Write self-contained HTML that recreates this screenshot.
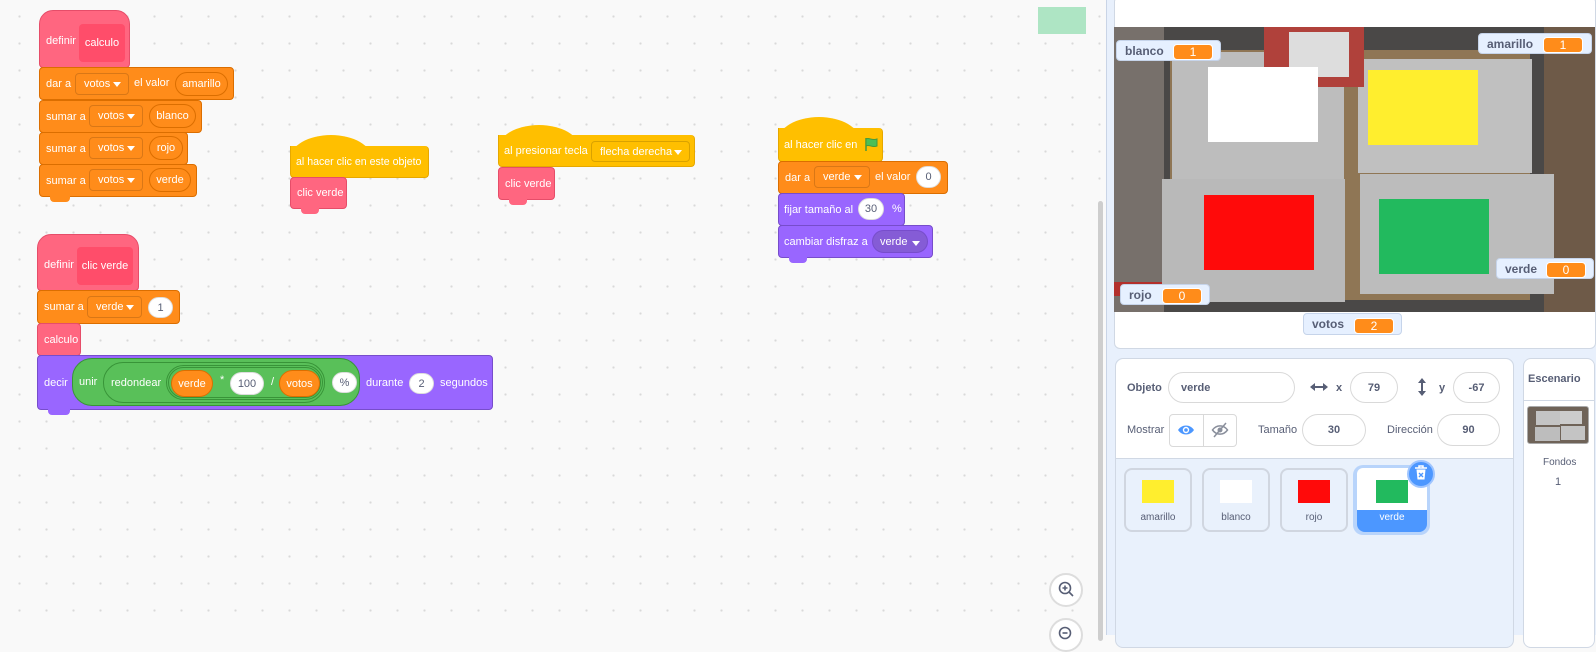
<!DOCTYPE html>
<html><head><meta charset="utf-8"><style>
*{box-sizing:border-box;margin:0;padding:0}
body{width:1596px;height:635px;overflow:hidden;position:relative;font-family:"Liberation Sans",sans-serif;background:#f9f9f9}
.ws{position:absolute;left:0;top:0;width:1106px;height:635px;background-color:#f9f9f9;background-image:radial-gradient(circle,#d9d9d9 1px,transparent 1.3px);background-size:27px 27px;background-position:6px 3px}
.a{position:absolute}
.b{position:absolute;border-radius:4px;border:1px solid;color:#fff;font-size:11px;display:flex;align-items:center;padding-left:6px;white-space:nowrap}
.ev{background:#ffbf00;border-color:#e6a800}
.ctl{background:#ff8c1a;border-color:#db6e00}
.my{background:#ff6680;border-color:#e64d69}
.lk{background:#9966ff;border-color:#774dcb}
.dd{position:absolute;border:1px solid rgba(0,0,0,.15);border-radius:4px;display:flex;align-items:center;padding-left:8px;color:#fff;font-size:11px}
.dd i{position:absolute;right:7px;top:50%;margin-top:-2px;width:0;height:0;border-left:4px solid transparent;border-right:4px solid transparent;border-top:5px solid #fff}
.ov{position:absolute;border-radius:20px;display:flex;align-items:center;justify-content:center;font-size:11px;color:#fff}
.wov{background:#fff;color:#575e75;border:1px solid #ddd}
.t{position:absolute;color:#fff;font-size:11px;white-space:nowrap}
.hat{position:absolute;border-radius:50% 50% 0 0/100% 100% 0 0}
.mon{position:absolute;background:#e6f0ff;border:1px solid #c6d4ea;border-radius:4px;font-size:12px;font-weight:bold;color:#575e75}
.mon span{position:absolute;top:3px}
.mon b{position:absolute;background:#ff8c1a;color:#fff;border-radius:4px;font-weight:normal;font-size:12px;text-align:center;line-height:14px;border:1px solid #fff}
.inp{position:absolute;border:1px solid #d9d9d9;border-radius:20px;background:#fff;font-size:11px;font-weight:bold;color:#575e75;display:flex;align-items:center;justify-content:center}
.lbl{position:absolute;font-size:11px;color:#575e75}
.tile{position:absolute;width:68px;height:64px;border:2px solid #d0d6e0;border-radius:8px;background:#e9f1fc;font-size:10px;color:#575e75;text-align:center}
.tile div{position:absolute;left:16px;top:10px;width:32px;height:23px}
.tile p{position:absolute;left:0;right:0;top:42px}
</style></head><body>
<div class="ws"></div>
<div class="a" style="left:1038px;top:7px;width:48px;height:27px;background:#aee5c4"></div>

<!-- definir calculo -->
<div class="b my" style="left:39px;top:10px;width:91px;height:58px;border-radius:14px 14px 4px 4px;padding-top:4px">definir</div>
<div class="a" style="left:79px;top:24px;width:46px;height:38px;background:#ff4d6a;border-radius:4px;color:#fff;font-size:11px;display:flex;align-items:center;justify-content:center">calculo</div>
<div class="b ctl" style="left:39px;top:67px;width:195px;height:33px">dar a</div>
<div class="dd" style="left:75px;top:73px;width:54px;height:22px">votos<i></i></div>
<div class="t" style="left:134px;top:77px">el valor</div>
<div class="ov" style="left:175px;top:72px;width:53px;height:24px;border:1px solid #db6e00">amarillo</div>
<div class="b ctl" style="left:39px;top:100px;width:163px;height:33px">sumar a</div>
<div class="dd" style="left:89px;top:105px;width:54px;height:22px">votos<i></i></div>
<div class="ov" style="left:149px;top:104px;width:47px;height:24px;border:1px solid #db6e00">blanco</div>
<div class="b ctl" style="left:39px;top:132px;width:149px;height:33px">sumar a</div>
<div class="dd" style="left:89px;top:137px;width:54px;height:22px">votos<i></i></div>
<div class="ov" style="left:149px;top:136px;width:34px;height:24px;border:1px solid #db6e00">rojo</div>
<div class="b ctl" style="left:39px;top:164px;width:158px;height:33px">sumar a</div>
<div class="dd" style="left:89px;top:169px;width:54px;height:22px">votos<i></i></div>
<div class="ov" style="left:149px;top:168px;width:42px;height:24px;border:1px solid #db6e00">verde</div>
<div class="a" style="left:50px;top:196px;width:20px;height:6px;background:#ff8c1a;border-radius:0 0 4px 4px"></div>

<!-- al hacer clic en este objeto -->
<div class="hat ev" style="left:290px;top:135px;width:82px;height:24px"></div>
<div class="b ev" style="left:290px;top:146px;width:139px;height:32px;border-top:none;border-radius:0 4px 4px 4px;padding-left:5px;font-size:10.6px">al hacer clic en este objeto</div>
<div class="b my" style="left:290px;top:177px;width:57px;height:32px">clic verde</div>
<div class="a" style="left:301px;top:208px;width:18px;height:6px;background:#ff6680;border-radius:0 0 4px 4px"></div>

<!-- al presionar tecla -->
<div class="hat ev" style="left:498px;top:125px;width:82px;height:24px"></div>
<div class="b ev" style="left:498px;top:135px;width:197px;height:32px;border-top:none;border-radius:0 4px 4px 4px;padding-left:5px">al presionar tecla</div>
<div class="dd" style="left:591px;top:141px;width:99px;height:21px">flecha derecha<i></i></div>
<div class="b my" style="left:498px;top:167px;width:57px;height:33px">clic verde</div>
<div class="a" style="left:509px;top:199px;width:18px;height:6px;background:#ff6680;border-radius:0 0 4px 4px"></div>

<!-- flag script -->
<div class="hat ev" style="left:778px;top:117px;width:82px;height:24px"></div>
<div class="b ev" style="left:778px;top:128px;width:105px;height:34px;border-top:none;border-radius:0 4px 4px 4px;padding-left:5px">al hacer clic en</div>
<svg class="a" style="left:864px;top:137px" width="14" height="14" viewBox="0 0 14 14"><path d="M2 1v13" stroke="#45993d" stroke-width="1.5"/><path d="M2 2c3-2 6 2 11 0v7c-5 2-8-2-11 0z" fill="#4cbf56" stroke="#45993d"/></svg>
<div class="b ctl" style="left:778px;top:161px;width:170px;height:33px">dar a</div>
<div class="dd" style="left:814px;top:166px;width:56px;height:22px">verde<i></i></div>
<div class="t" style="left:875px;top:171px">el valor</div>
<div class="ov wov" style="left:916px;top:166px;width:25px;height:22px">0</div>
<div class="b lk" style="left:778px;top:193px;width:127px;height:33px;padding-left:5px">fijar tamaño al</div>
<div class="ov wov" style="left:858px;top:198px;width:26px;height:22px">30</div>
<div class="t" style="left:892px;top:203px">%</div>
<div class="b lk" style="left:778px;top:225px;width:155px;height:33px;padding-left:5px">cambiar disfraz a</div>
<div class="ov" style="left:872px;top:230px;width:56px;height:23px;background:#855cd6;border:1px solid #774dcb;justify-content:flex-start;padding-left:7px">verde<i style="position:absolute;right:7px;top:10px;border-left:4px solid transparent;border-right:4px solid transparent;border-top:5px solid #fff"></i></div>
<div class="a" style="left:789px;top:257px;width:18px;height:6px;background:#9966ff;border-radius:0 0 4px 4px"></div>

<!-- definir clic verde -->
<div class="b my" style="left:37px;top:234px;width:102px;height:57px;border-radius:14px 14px 4px 4px;padding-top:4px">definir</div>
<div class="a" style="left:77px;top:247px;width:56px;height:38px;background:#ff4d6a;border-radius:4px;color:#fff;font-size:11px;display:flex;align-items:center;justify-content:center">clic verde</div>
<div class="b ctl" style="left:37px;top:290px;width:143px;height:34px">sumar a</div>
<div class="dd" style="left:87px;top:296px;width:55px;height:22px">verde<i></i></div>
<div class="ov wov" style="left:148px;top:297px;width:25px;height:21px">1</div>
<div class="b my" style="left:37px;top:323px;width:44px;height:33px">calculo</div>
<div class="b lk" style="left:37px;top:355px;width:456px;height:55px">decir</div>
<div class="a" style="left:48px;top:409px;width:22px;height:6px;background:#9966ff;border-radius:0 0 4px 4px"></div>
<div class="ov" style="left:72px;top:358px;width:288px;height:48px;background:#59c059;border:1px solid #389438;justify-content:flex-start;padding-left:6px">unir</div>
<div class="ov" style="left:103px;top:362px;width:222px;height:41px;background:#59c059;border:1px solid #389438;justify-content:flex-start;padding-left:7px">redondear</div>
<div class="ov" style="left:166px;top:365px;width:157px;height:35px;background:#59c059;border:3px double #389438"></div>
<div class="ov" style="left:171px;top:370px;width:42px;height:27px;background:#ff8c1a;border:1px solid #db6e00">verde</div>
<div class="t" style="left:220px;top:374px">*</div>
<div class="ov wov" style="left:230px;top:372px;width:34px;height:23px">100</div>
<div class="t" style="left:271px;top:376px">/</div>
<div class="ov" style="left:279px;top:370px;width:41px;height:27px;background:#ff8c1a;border:1px solid #db6e00">votos</div>
<div class="ov wov" style="left:332px;top:372px;width:25px;height:21px">%</div>
<div class="t" style="left:366px;top:377px">durante</div>
<div class="ov wov" style="left:409px;top:373px;width:25px;height:21px">2</div>
<div class="t" style="left:440px;top:377px">segundos</div>

<!-- scrollbar & zoom -->
<div class="a" style="left:1098px;top:201px;width:5px;height:440px;background:#cecece;border-radius:3px"></div>
<div class="a" style="left:1049px;top:573px;width:34px;height:34px;border-radius:50%;background:#fff;border:2px solid #ddd"></div>
<svg class="a" style="left:1057px;top:580px" width="20" height="20" viewBox="0 0 20 20"><circle cx="8" cy="8" r="5.5" fill="none" stroke="#575e75" stroke-width="1.6"/><path d="M8 5.5v5M5.5 8h5M12 12l4 4" stroke="#575e75" stroke-width="1.6"/></svg>
<div class="a" style="left:1049px;top:618px;width:34px;height:34px;border-radius:50%;background:#fff;border:2px solid #ddd"></div>
<svg class="a" style="left:1057px;top:625px" width="20" height="20" viewBox="0 0 20 20"><circle cx="8" cy="8" r="5.5" fill="none" stroke="#575e75" stroke-width="1.6"/><path d="M5.5 8h5" stroke="#575e75" stroke-width="1.6"/></svg>

<!-- right side -->
<div class="a" style="left:1106px;top:0;width:490px;height:635px;background:#e8f0fc;border-left:1px solid #c9d4e6"></div>
<div class="a" style="left:1114px;top:-4px;width:482px;height:353px;background:#fff;border:1px solid #d0d8e4;border-radius:6px"></div>
<!-- stage photo -->
<div class="a" style="left:1114px;top:27px;width:481px;height:285px;background:#4a4847;overflow:hidden">
 <div class="a" style="left:0;top:0;width:50px;height:285px;background:#77706b"></div>
 <div class="a" style="left:430px;top:0;width:51px;height:285px;background:#6e5a48"></div>
 <div class="a" style="left:0;top:255px;width:50px;height:14px;background:#b3302c"></div>
 <div class="a" style="left:56px;top:23px;width:360px;height:250px;background:#8f7655"></div>
 <div class="a" style="left:58px;top:25px;width:172px;height:142px;background:#bdbdbd"></div>
 <div class="a" style="left:244px;top:32px;width:174px;height:114px;background:#c0c0c0"></div>
 <div class="a" style="left:48px;top:152px;width:183px;height:123px;background:#b9b9b9"></div>
 <div class="a" style="left:246px;top:147px;width:194px;height:120px;background:#bcbcbc"></div>
 <div class="a" style="left:150px;top:0;width:100px;height:60px;background:#b0413b"></div>
 <div class="a" style="left:175px;top:5px;width:60px;height:45px;background:#ddd"></div>
</div>
<div class="a" style="left:1208px;top:67px;width:110px;height:75px;background:#fff"></div>
<div class="a" style="left:1368px;top:70px;width:110px;height:75px;background:#ffee2e"></div>
<div class="a" style="left:1204px;top:195px;width:110px;height:75px;background:#ff0a0a"></div>
<div class="a" style="left:1379px;top:199px;width:110px;height:75px;background:#22ba5e"></div>
<div class="mon" style="left:1116px;top:40px;width:105px;height:21px"><span style="left:8px">blanco</span><b style="left:56px;top:3px;width:40px">1</b></div>
<div class="mon" style="left:1478px;top:33px;width:114px;height:21px"><span style="left:8px">amarillo</span><b style="left:64px;top:3px;width:40px">1</b></div>
<div class="mon" style="left:1496px;top:258px;width:98px;height:21px"><span style="left:8px">verde</span><b style="left:49px;top:3px;width:40px">0</b></div>
<div class="mon" style="left:1120px;top:284px;width:90px;height:21px"><span style="left:8px">rojo</span><b style="left:41px;top:3px;width:40px">0</b></div>
<div class="mon" style="left:1303px;top:313px;width:99px;height:22px"><span style="left:8px">votos</span><b style="left:50px;top:4px;width:40px">2</b></div>

<!-- sprite info -->
<div class="a" style="left:1115px;top:358px;width:399px;height:290px;background:#e9f1fc;border:1px solid #d0d8e4;border-radius:8px"></div>
<div class="a" style="left:1116px;top:359px;width:397px;height:100px;background:#fff;border-bottom:1px solid #d0d8e4;border-radius:8px 8px 0 0"></div>
<div class="lbl" style="left:1127px;top:382px;font-weight:bold">Objeto</div>
<div class="inp" style="left:1168px;top:372px;width:127px;height:31px;justify-content:flex-start;padding-left:12px">verde</div>
<svg class="a" style="left:1310px;top:382px" width="18" height="10" viewBox="0 0 18 10"><path d="M3 5h12" stroke="#575e75" stroke-width="2"/><path d="M0 5l5-4v8zM18 5l-5-4v8z" fill="#575e75"/></svg>
<div class="lbl" style="left:1336px;top:382px;font-weight:bold">x</div>
<div class="inp" style="left:1350px;top:372px;width:48px;height:31px">79</div>
<svg class="a" style="left:1417px;top:378px" width="10" height="18" viewBox="0 0 10 18"><path d="M5 3v12" stroke="#575e75" stroke-width="2"/><path d="M5 0l4 5H1zM5 18l4-5H1z" fill="#575e75"/></svg>
<div class="lbl" style="left:1439px;top:382px;font-weight:bold">y</div>
<div class="inp" style="left:1453px;top:372px;width:47px;height:31px">-67</div>
<div class="lbl" style="left:1127px;top:424px">Mostrar</div>
<div class="a" style="left:1169px;top:414px;width:68px;height:33px;border:1px solid #d9d9d9;border-radius:4px;background:#fff"></div>
<div class="a" style="left:1203px;top:414px;width:34px;height:33px;border-left:1px solid #d9d9d9"></div>
<svg class="a" style="left:1177px;top:422px" width="18" height="16" viewBox="0 0 18 16"><path d="M1 8c4-6 12-6 16 0c-4 6-12 6-16 0z" fill="#4c97ff"/><circle cx="9" cy="8" r="3.2" fill="#fff"/><circle cx="9" cy="8" r="1.8" fill="#4c97ff"/></svg>
<svg class="a" style="left:1211px;top:422px" width="18" height="16" viewBox="0 0 18 16"><path d="M1.5 8c4-5.5 11-5.5 15 0c-4 5.5-11 5.5-15 0z" fill="none" stroke="#8a8f9c" stroke-width="1.5"/><circle cx="9" cy="8" r="2.5" fill="#8a8f9c"/><path d="M3 15L15 1" stroke="#8a8f9c" stroke-width="1.5"/></svg>
<div class="lbl" style="left:1258px;top:424px">Tamaño</div>
<div class="inp" style="left:1302px;top:414px;width:64px;height:32px">30</div>
<div class="lbl" style="left:1387px;top:424px">Dirección</div>
<div class="inp" style="left:1437px;top:414px;width:63px;height:32px">90</div>
<div class="tile" style="left:1124px;top:468px"><div style="background:#ffee2e"></div><p>amarillo</p></div>
<div class="tile" style="left:1202px;top:468px"><div style="background:#fff"></div><p>blanco</p></div>
<div class="tile" style="left:1280px;top:468px"><div style="background:#ff0a0a"></div><p>rojo</p></div>
<div class="a" style="left:1353px;top:465px;width:77px;height:70px;border-radius:10px;background:#b8d4fb"></div>
<div class="tile" style="left:1357px;top:468px;width:70px;border:2px solid #4c97ff;background:#4c97ff;color:#fff"><div style="left:-2px;top:-2px;width:70px;height:42px;background:#fff;border-radius:6px 6px 0 0"></div><div style="left:17px;top:10px;background:#22ba5e"></div><p>verde</p></div>
<div class="a" style="left:1407px;top:460px;width:28px;height:28px;border-radius:50%;background:#4c97ff;border:2px solid #9fc5ff"></div>
<svg class="a" style="left:1414px;top:465px" width="14" height="16" viewBox="0 0 14 16"><path d="M1 3h12M5 3V1h4v2" stroke="#fff" stroke-width="1.5" fill="none"/><path d="M2.5 4.5h9l-1 10h-7z" fill="#fff"/><path d="M5 8l4 4M9 8l-4 4" stroke="#4c97ff" stroke-width="1.4"/></svg>

<!-- escenario -->
<div class="a" style="left:1523px;top:358px;width:72px;height:290px;background:#fff;border:1px solid #d0d8e4;border-radius:8px"></div>
<div class="a" style="left:1524px;top:400px;width:70px;height:1px;background:#d0d8e4"></div>
<div class="lbl" style="left:1528px;top:373px;font-weight:bold">Escenario</div>
<div class="a" style="left:1527px;top:406px;width:62px;height:38px;background:#6f6358;border-radius:3px;border:1px solid #aaa">
 <div class="a" style="left:8px;top:4px;width:24px;height:14px;background:#c4c4c4"></div><div class="a" style="left:32px;top:4px;width:22px;height:13px;background:#ccc"></div>
 <div class="a" style="left:7px;top:20px;width:25px;height:14px;background:#bdbdbd"></div><div class="a" style="left:33px;top:19px;width:24px;height:14px;background:#c4c4c4"></div></div>
<div class="lbl" style="left:1543px;top:457px;font-size:10px">Fondos</div>
<div class="lbl" style="left:1555px;top:476px">1</div>
</body></html>
